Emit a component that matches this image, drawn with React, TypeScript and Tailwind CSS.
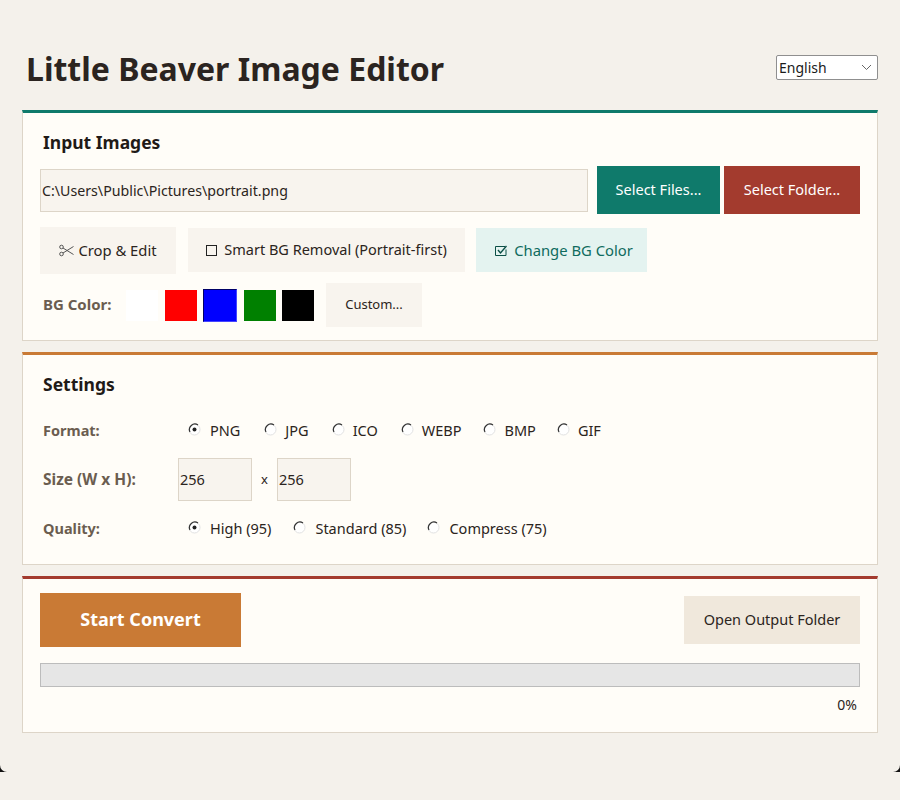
const font = { fontFamily: '"Noto Sans", "Open Sans", sans-serif' };

function Radio({ checked }: { checked?: boolean }) {
  return (
    <svg width="13" height="13" viewBox="0 0 13 13" className="-mt-[3px] shrink-0">
      <circle cx="6.5" cy="6.5" r="5.5" fill="#ffffff" stroke="#e2e2e2" />
      <path d="M2 9 A5.5 5.5 0 0 1 10 2" fill="none" stroke="#333333" strokeWidth="1.2" />
      {checked && <circle cx="6.5" cy="6.5" r="2" fill="#222222" />}
    </svg>
  );
}

function RadioItem({ label, checked, gap }: { label: string; checked?: boolean; gap: string }) {
  return (
    <div className={`flex items-center ${gap}`}>
      <Radio checked={checked} />
      <span>{label}</span>
    </div>
  );
}

export default function App() {
  return (
    <div style={font} className="h-[800px] w-[900px] overflow-hidden bg-[#f4f1eb] text-[14.5px] text-[#2b2420]">
      <div className="h-[772px] bg-[#111111]">
        <div className="h-full rounded-b-[7px] bg-[#f4f1eb] px-[22px] pt-[48px]">
          <header className="flex h-[62px] items-start justify-between">
            <h1 className="pl-1 text-[32px] font-bold leading-[42px] text-[#2b2420]">Little Beaver Image Editor</h1>
            <div className="mt-[7px] flex h-[25px] w-[102px] items-center justify-between rounded-[2px] border border-[#8f8f8f] bg-white pl-[2px] pr-[5px] text-[14px] text-[#1a1a1a]">
              <span>English</span>
              <svg width="11" height="7" viewBox="0 0 11 7" fill="none" stroke="#666666"><path d="M1 1l4.5 4.5L10 1" /></svg>
            </div>
          </header>

          <section className="h-[231px] border border-t-[3px] border-[#ddd5c8] border-t-[#0f7a6b] bg-[#fffdf8] px-[17px]">
            <h2 className="ml-[3px] mt-[16px] text-[17.5px] font-bold leading-[26px] text-[#1f1a17]">Input Images</h2>
            <div className="mt-[11px] flex items-center">
              <div className="flex h-[43px] w-[548px] items-center border border-[#ddd5c8] bg-[#f8f4ee] pl-[1px] pt-[1px] text-[14.2px]">C:\Users\Public\Pictures\portrait.png</div>
              <div className="ml-[9px] flex h-[48px] w-[123px] items-center justify-center bg-[#0f7a6b] text-white">Select Files...</div>
              <div className="ml-[4px] flex h-[48px] w-[136px] items-center justify-center bg-[#a33b2e] text-white">Select Folder...</div>
            </div>
            <div className="mt-[13px] flex items-start">
              <div className="flex h-[47px] w-[136px] items-center justify-center bg-[#f8f4ee] text-[14.8px]">
                <svg width="15" height="13" viewBox="0 0 15 13" fill="none" stroke="#555555" className="mr-[4px]">
                  <circle cx="2.5" cy="3" r="1.8" />
                  <circle cx="2.5" cy="10" r="1.8" />
                  <path d="M4 4l10.5 6.5M4 9L14.5 2.5" />
                </svg>
                Crop &amp; Edit
              </div>
              <div className="ml-[12px] mt-[1px] flex h-[44px] w-[277px] items-center justify-center bg-[#f8f4ee]">
                <svg width="11" height="11" viewBox="0 0 11 11" fill="none" stroke="#222222" className="mr-[7px]"><rect x="0.5" y="0.5" width="10" height="10" /></svg>
                Smart BG Removal (Portrait-first)
              </div>
              <div className="ml-[11px] mt-[1px] flex h-[44px] w-[171px] items-center justify-center bg-[#e4f3f0] pl-[5px] text-[14.8px] text-[#0f6b5e]">
                <svg width="12" height="11" viewBox="0 0 12 11" fill="none" stroke="#0b4f46" className="mr-[7px]"><path d="M11 4.5V10.5H0.5V1.5H10" /><path d="M3 5l2.5 3L11.5 1" strokeWidth="1.4" /></svg>
                Change BG Color
              </div>
            </div>
            <div className="mt-[9px] flex items-center">
              <span className="mb-[2px] ml-[3px] w-[83px] text-[15px] font-bold text-[#6b5d50]">BG Color:</span>
              <div className="h-[31px] w-[32px] bg-white" />
              <div className="ml-[7px] h-[31px] w-[32px] bg-[#ff0000]" />
              <div className="ml-[6px] h-[33px] w-[34px] border border-[#000066] border-b-[#4444ff] border-r-[#4444ff] bg-[#0000ff]" />
              <div className="ml-[7px] h-[31px] w-[32px] bg-[#008000]" />
              <div className="ml-[6px] h-[31px] w-[32px] bg-black" />
              <div className="ml-[12px] flex h-[44px] w-[96px] items-center justify-center bg-[#f8f4ee] text-[13px]">Custom...</div>
            </div>
          </section>

          <section className="mt-[11px] h-[213px] border border-t-[3px] border-[#ddd5c8] border-t-[#c97a35] bg-[#fffdf8] px-[17px]">
            <h2 className="ml-[3px] mt-[16px] text-[17.5px] font-bold leading-[26px] text-[#1f1a17]">Settings</h2>
            <div className="mt-[23px] flex h-[22px] items-center">
              <span className="ml-[3px] w-[145px] font-bold text-[#6b5d50]">Format:</span>
              <RadioItem label="PNG" checked gap="gap-[9px] mr-[24px]" />
              <RadioItem label="JPG" gap="gap-[8px] mr-[23px]" />
              <RadioItem label="ICO" gap="gap-[8px] mr-[23px]" />
              <RadioItem label="WEBP" gap="gap-[8px] mr-[21px]" />
              <RadioItem label="BMP" gap="gap-[9px] mr-[21px]" />
              <RadioItem label="GIF" gap="gap-[8px]" />
            </div>
            <div className="mt-[16px] flex items-center">
              <span className="ml-[3px] w-[135px] text-[15.5px] font-bold text-[#6b5d50]">Size (W x H):</span>
              <div className="flex h-[43px] w-[74px] items-center border border-[#ddd5c8] bg-[#f8f4ee] pl-[1px]">256</div>
              <span className="w-[25px] text-center text-[13px]">x</span>
              <div className="flex h-[43px] w-[74px] items-center border border-[#ddd5c8] bg-[#f8f4ee] pl-[1px]">256</div>
            </div>
            <div className="mt-[17px] flex h-[22px] items-center">
              <span className="ml-[3px] w-[145px] font-bold text-[#6b5d50]">Quality:</span>
              <RadioItem label="High (95)" checked gap="gap-[9px] mr-[22px]" />
              <RadioItem label="Standard (85)" gap="gap-[9px] mr-[21px]" />
              <RadioItem label="Compress (75)" gap="gap-[9px]" />
            </div>
          </section>

          <section className="mt-[11px] h-[157px] border border-t-[3px] border-[#ddd5c8] border-t-[#a33b2e] bg-[#fffdf8] px-[17px] pt-[14px]">
            <div className="flex items-center justify-between">
              <div className="flex h-[54px] w-[201px] items-center justify-center bg-[#c97a35] pb-[2px] text-[18px] font-bold text-white">Start Convert</div>
              <div className="flex h-[48px] w-[176px] items-center justify-center bg-[#f0e8dc]">Open Output Folder</div>
            </div>
            <div className="mt-[16px] h-[24px] border border-[#bcbcbc] bg-[#e6e6e6]" />
            <div className="mt-[8px] pr-[3px] text-right text-[14px] leading-[20px]">0%</div>
          </section>
        </div>
      </div>
    </div>
  );
}
